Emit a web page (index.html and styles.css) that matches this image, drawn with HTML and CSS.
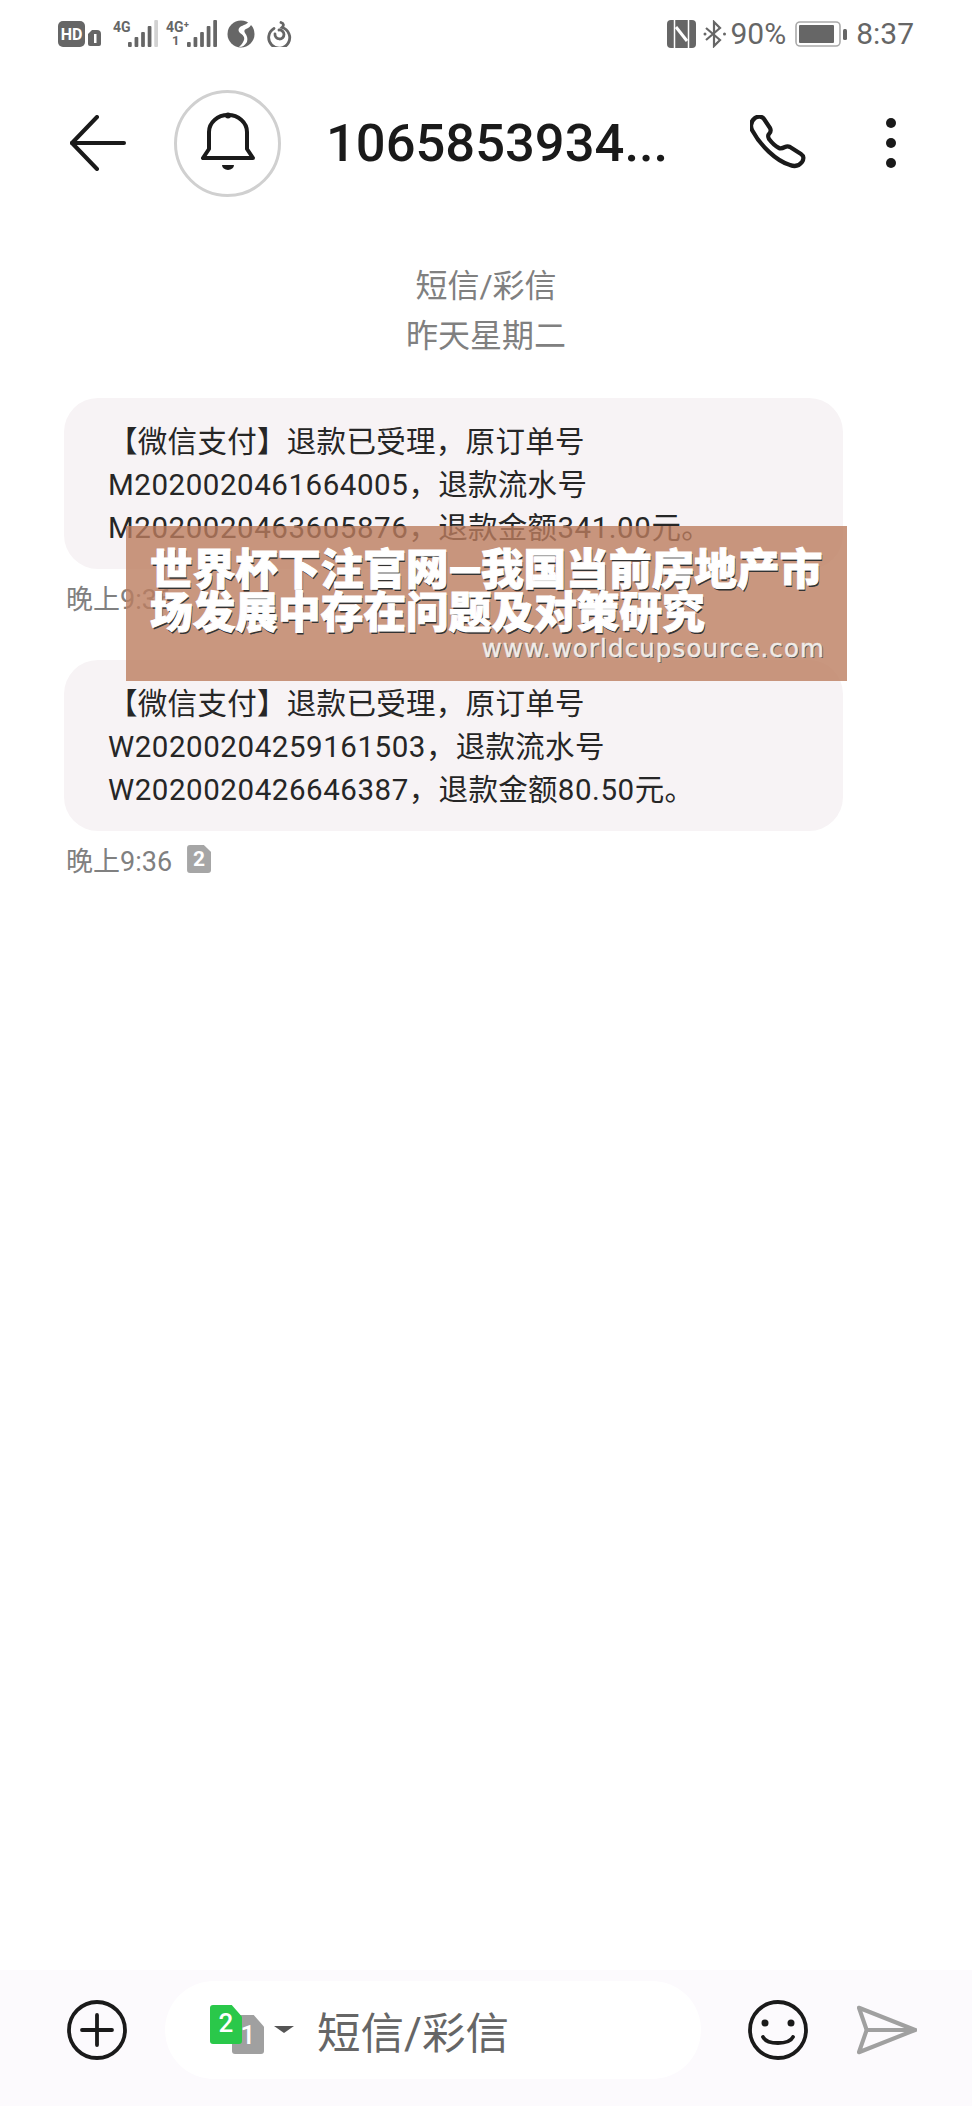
FILE: index.html
```html
<!DOCTYPE html>
<html>
<head>
    <title>短信/彩信</title>
    <meta charset="utf-8">
    <link rel="stylesheet" href="styles.css">
</head>
<body>
<div class="screen">

    <div class="status-bar">
        <div class="status-group">
            <svg class="ic" width="44" height="28" viewBox="0 0 44 28">
                <rect x="0" y="1" width="27" height="26" rx="5" fill="#666"/>
                <text x="13.5" y="20" class="hd-text">HD</text>
                <path d="M34 10h5a4 4 0 0 1 4 4v10a2 2 0 0 1-2 2h-9a2 2 0 0 1-2-2v-10z" fill="#666"/>
                <rect x="36" y="14" width="2.5" height="9" fill="#fff"/>
            </svg>
            <div class="signal">
                <span class="net">4G</span>
                <svg width="30" height="28" viewBox="0 0 32 28" preserveAspectRatio="none">
                    <rect x="0" y="22" width="4" height="5" rx="1" fill="#666"/>
                    <rect x="7" y="17" width="4" height="10" rx="1" fill="#666"/>
                    <rect x="14" y="12" width="4" height="15" rx="1" fill="#666"/>
                    <rect x="21" y="6" width="4" height="21" rx="1" fill="#666"/>
                    <rect x="28" y="0" width="4" height="27" rx="1" fill="#d2d2d2"/>
                </svg>
            </div>
            <div class="signal signal-two">
                <span class="net">4G⁺</span>
                <span class="net-sub">1</span>
                <svg width="30" height="28" viewBox="0 0 32 28" preserveAspectRatio="none">
                    <rect x="0" y="22" width="4" height="5" rx="1" fill="#666"/>
                    <rect x="7" y="17" width="4" height="10" rx="1" fill="#666"/>
                    <rect x="14" y="12" width="4" height="15" rx="1" fill="#666"/>
                    <rect x="21" y="6" width="4" height="21" rx="1" fill="#666"/>
                    <rect x="28" y="0" width="4" height="27" rx="1" fill="#666"/>
                </svg>
            </div>
            <svg class="ic ic-globe" width="28" height="28" viewBox="0 0 28 28">
                <circle cx="14" cy="14" r="13.5" fill="#666"/>
                <path d="M22 1c-1 3-6 4-9 6-2 2-2 4 0 6 3 2 5 4 4 7-1 3-3 5-5 7 4 0 6-2 8-5 1-4 0-6-2-9-1-2-1-3 1-4 3-1 5-3 6-6z" fill="#fff"/>
            </svg>
            <svg class="ic" width="26" height="26" viewBox="0 0 26 26" fill="none" stroke="#666" stroke-width="2.8" stroke-linecap="round">
                <path d="M15 1.500c3 1 3 3 1 5a10.500 10.500 0 1 1-8 1"/>
                <path d="M13 9a4.500 4.500 0 1 1-4 4"/>
            </svg>
        </div>
        <div class="status-group status-right">
            <svg class="ic" width="29" height="28" viewBox="0 0 29 28">
                <rect x="0" y="0" width="29" height="28" rx="4" fill="#666"/>
                <path d="M7.500 28V0M21.500 28V0" stroke="#fff" stroke-width="1.500"/>
                <path d="M9 7l11 14" stroke="#fff" stroke-width="3"/>
            </svg>
            <svg class="ic ic-bt" width="24" height="28" viewBox="0 0 24 28" fill="none" stroke="#666" stroke-width="2.2">
                <path d="M3 8l14 12-6 6V2l6 6L3 20"/>
                <circle cx="21.500" cy="14" r="1.500" fill="#666" stroke="none"/>
                <circle cx="2" cy="14" r="1.500" fill="#666" stroke="none"/>
            </svg>
            <span class="status-text pct">90%</span>
            <svg class="ic ic-batt" width="52" height="26" viewBox="0 0 52 26">
                <rect x="1" y="1" width="44" height="24" rx="4" fill="none" stroke="#aaa" stroke-width="1.6"/>
                <rect x="4" y="4" width="35" height="18" rx="1" fill="#666"/>
                <rect x="48" y="8" width="4" height="11" rx="1.500" fill="#666"/>
            </svg>
            <span class="status-text clock">8:37</span>
        </div>
    </div>

    <div class="header">
        <svg class="back" width="56" height="56" viewBox="0 0 56 56" fill="none" stroke="#1a1a1a" stroke-width="4" stroke-linecap="round" stroke-linejoin="round">
            <path d="M27 2L2 28l25 26"/>
            <path d="M2 28h52"/>
        </svg>
        <div class="avatar">
            <svg width="54" height="62" viewBox="0 0 54 62" fill="none" stroke="#1a1a1a" stroke-width="4" stroke-linejoin="round">
                <path d="M2 46h50l-6-9V20a19 17 0 0 0-38 0v17z"/>
                <circle cx="27" cy="3.500" r="3" fill="#1a1a1a" stroke="none"/>
                <path d="M21 53a6 5 0 0 0 12 0z" fill="#1a1a1a" stroke="none"/>
            </svg>
        </div>
        <div class="title">1065853934...</div>
        <svg class="phone" width="56" height="56" viewBox="0 0 56 56" fill="none" stroke="#1a1a1a" stroke-width="4.200" stroke-linejoin="round">
            <path d="M5 3c3-2 7-2 9 1l6 9c1 2 1 4-1 6-1 1-1 3 0 5 3 4 6 7 10 9 2 1 4 0 6-1 2-1 3-1 5 0l11 7c3 2 3 5 1 8-3 4-7 5-12 3C26 46 10 30 2 15 0 10 1 6 5 3z"/>
        </svg>
        <div class="more"><i></i><i></i><i></i></div>
    </div>

    <div class="thread">
        <div class="thread-head">短信/彩信<br>昨天星期二</div>

        <div class="bubble">【微信支付】退款已受理，原订单号<br><span class="num">M2020020461664005</span>，退款流水号<br><span class="num">M2020020463605876</span>，退款金额<span class="num">341.00</span>元。</div>
        <div class="time"><span>晚上9:36</span></div>

        <div class="bubble bubble-next">【微信支付】退款已受理，原订单号<br><span class="num">W20200204259161503</span>，退款流水号<br><span class="num">W2020020426646387</span>，退款金额<span class="num">80.50</span>元。</div>
        <div class="time">
            <span>晚上9:36</span>
            <span class="sim-badge">2</span>
        </div>
    </div>

    <div class="composer">
        <svg width="60" height="60" viewBox="0 0 60 60" fill="none" stroke="#1a1a1a" stroke-width="3.8" stroke-linecap="round">
            <circle cx="30" cy="30" r="28"/>
            <path d="M15 30h30M30 15v30"/>
        </svg>
        <div class="input">
            <div class="sim-pick">
                <span class="sim sim-back">1</span>
                <span class="sim sim-front">2</span>
            </div>
            <svg class="caret" width="20" height="8" viewBox="0 0 20 8"><path d="M0 0h20l-10 7z" fill="#555"/></svg>
            <span class="placeholder">短信/彩信</span>
        </div>
        <svg class="smile" width="60" height="60" viewBox="0 0 60 60" fill="none" stroke="#1a1a1a" stroke-width="3.800" stroke-linecap="round">
            <circle cx="30" cy="30" r="28"/>
            <circle cx="17" cy="23" r="3.500" fill="#1a1a1a" stroke="none"/>
            <circle cx="43" cy="23" r="3.500" fill="#1a1a1a" stroke="none"/>
            <path d="M15 37c4 8 26 8 30 0"/>
        </svg>
        <svg class="send" width="60" height="52" viewBox="0 0 62 52" fill="none" stroke="#a0a0a0" stroke-width="4.200" stroke-linejoin="round" stroke-linecap="round">
            <path d="M2 3l58 23L2 49l8-23z"/>
            <path d="M10 26h50"/>
        </svg>
    </div>

    <div class="promo">
        <div class="promo-title">世界杯下注官网—我国当前房地产市<br>场发展中存在问题及对策研究</div>
        <div class="promo-url">www.worldcupsource.com</div>
    </div>
</div>
</body>
</html>
```

FILE: styles.css
```css
* {
    box-sizing: border-box;
}
body {
    margin: 0;
    background: #fff;
    font-family: Roboto, "Noto Sans CJK SC", sans-serif;
}
.screen {
    position: relative;
    width: 972px;
    height: 2106px;
    display: flex;
    flex-direction: column;
    overflow: hidden;
}
.status-bar {
    height: 68px;
    padding: 0 58px;
    display: flex;
    justify-content: space-between;
    align-items: center;
    color: #666;
}
.status-group {
    display: flex;
    align-items: center;
}
.ic {
    flex: none;
}
.hd-text {
    font: 700 16px Roboto, sans-serif;
    fill: #fff;
    text-anchor: middle;
}
.signal {
    position: relative;
    display: flex;
    align-items: flex-end;
    height: 28px;
    margin-left: 11px;
    padding-left: 15px;
}
.signal-two {
    margin-left: 8px;
    padding-left: 21px;
}
.net {
    position: absolute;
    left: 0;
    top: -1px;
    font: 700 14px/16px Roboto, sans-serif;
}
.net-sub {
    position: absolute;
    left: 6px;
    bottom: 0;
    font: 700 13px/14px Roboto, sans-serif;
}
.ic-globe {
    margin: 0 11px 0 10px;
}
.ic-bt {
    margin-left: 7px;
}
.status-text {
    font-size: 30px;
    line-height: 34px;
}
.pct {
    margin-left: 3px;
}
.ic-batt {
    margin-left: 9px;
}
.clock {
    margin-left: 9px;
}
.header {
    height: 150px;
    padding-left: 70px;
    display: flex;
    align-items: center;
}
.avatar {
    width: 107px;
    height: 107px;
    margin-left: 48px;
    border: 3px solid #d0d0d0;
    border-radius: 50%;
    display: flex;
    align-items: center;
    justify-content: center;
}
.title {
    width: 424px;
    margin-left: 45px;
    font-size: 52.5px;
    font-weight: 500;
    color: #1a1a1a;
    white-space: nowrap;
}
.more {
    margin-left: 80px;
    display: flex;
    flex-direction: column;
    gap: 10px;
}
.more i {
    display: block;
    width: 10px;
    height: 10px;
    border-radius: 50%;
    background: #1a1a1a;
}
.thread {
    flex: 1;
    padding: 43px 0 0 64px;
}
.thread-head {
    width: 844px;
    text-align: center;
    font-size: 32px;
    line-height: 50px;
    color: #808080;
}
.bubble {
    width: 779px;
    margin-top: 37px;
    padding: 23px 0 19px 44px;
    border-radius: 34px;
    background: #f7f3f5;
    font-size: 29.5px;
    letter-spacing: 0.3px;
    line-height: 43px;
    color: #262626;
    white-space: nowrap;
}
.num {
    letter-spacing: 0.55px;
}
.bubble-next {
    margin-top: 43px;
}
.time {
    display: flex;
    align-items: center;
    height: 40px;
    margin-top: 8px;
    padding-left: 2px;
    font-size: 27px;
    color: #808080;
}
.sim-badge {
    width: 24px;
    height: 28px;
    margin-left: 15px;
    border-radius: 3px;
    clip-path: polygon(0 0, 70% 0, 100% 25%, 100% 100%, 0 100%);
    background: #a6a6a6;
    color: #fff;
    font-size: 21px;
    font-weight: 700;
    line-height: 28px;
    text-align: center;
}
.composer {
    height: 136px;
    padding: 0 0 16px 67px;
    display: flex;
    align-items: center;
    background: #fcfafd;
}
.input {
    width: 536px;
    height: 98px;
    margin-left: 38px;
    padding-left: 45px;
    border-radius: 49px;
    background: #fff;
    display: flex;
    align-items: center;
}
.sim-pick {
    position: relative;
    width: 54px;
    height: 50px;
    flex: none;
}
.sim {
    position: absolute;
    color: #fff;
    text-align: center;
    font-weight: 500;
    border-radius: 3px;
    clip-path: polygon(0 0, 68% 0, 100% 30%, 100% 100%, 0 100%);
}
.sim-back {
    left: 22px;
    top: 10px;
    width: 32px;
    height: 39px;
    background: #a0a0a0;
    font-size: 26px;
    line-height: 40px;
}
.sim-front {
    left: 0;
    top: 0;
    width: 32px;
    height: 39px;
    background: #2ac84a;
    font-size: 26px;
    line-height: 36px;
}
.caret {
    margin-left: 10px;
    flex: none;
}
.placeholder {
    margin-left: 23px;
    font-size: 43.5px;
    color: #666;
    white-space: nowrap;
}
.smile {
    margin-left: 47px;
    flex: none;
}
.send {
    margin-left: 49px;
    flex: none;
}
.promo {
    position: absolute;
    left: 126px;
    top: 526px;
    width: 721px;
    height: 155px;
    padding: 23px 24px 0;
    background: rgba(187, 125, 95, 0.8);
    color: #fff;
}
.promo-title {
    font-size: 42.7px;
    font-weight: 900;
    line-height: 43px;
    white-space: nowrap;
    text-shadow: 1px 2px 0 #333;
    -webkit-text-stroke: 1px #fff;
}
.promo-url {
    margin-right: -2px;
    text-align: right;
    font-family: "DejaVu Sans", sans-serif;
    font-size: 24.5px;
    font-weight: 500;
    line-height: 28px;
    letter-spacing: 1.1px;
    color: #f0ece8;
    -webkit-text-stroke: 0.4px #f0ece8;
    text-shadow: 1px 1px 0 #555;
}
```
